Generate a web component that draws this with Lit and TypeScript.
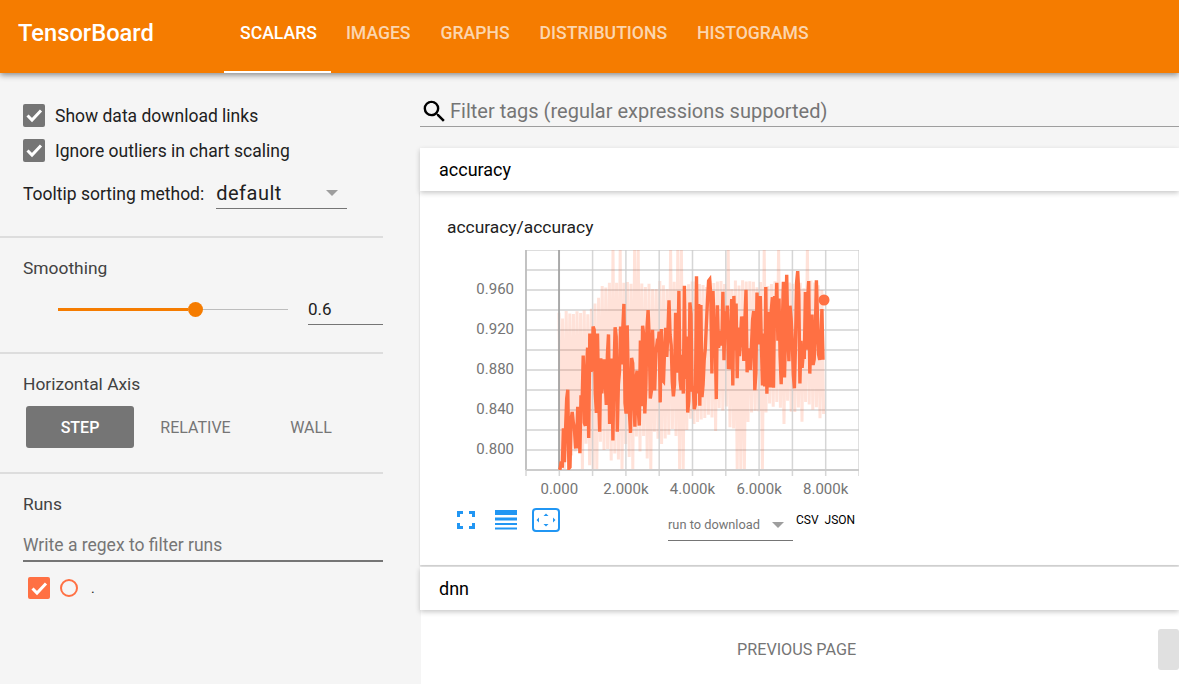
import { LitElement, css, html, svg } from 'lit';
import { customElement } from 'lit/decorators.js';

type Pt = [number, number];

// piecewise envelope of the curves, in chart pixels
const smoothTop: Pt[] = [[33, 220], [38, 170], [44, 113], [50, 116], [56, 100], [66, 60], [74, 80], [91, 49], [100, 55], [114, 50], [134, 60], [144, 35], [173, 21], [194, 35], [234, 40], [268, 18], [289, 28], [298, 40]];
const smoothLow: Pt[] = [[33, 220], [55, 220], [60, 190], [85, 190], [110, 203], [115, 170], [140, 165], [165, 163], [200, 145], [240, 145], [280, 140], [298, 110]];
const rawTop: Pt[] = [[33, 60], [60, 60], [75, 35], [90, 30], [298, 30]];
const rawLow: Pt[] = [[33, 220], [120, 210], [170, 185], [298, 170]];

const lerp = (pts: Pt[], x: number) => {
  for (let i = 1; i < pts.length; i++) {
    if (x <= pts[i][0]) {
      const [x0, y0] = pts[i - 1];
      const [x1, y1] = pts[i];
      return y0 + ((y1 - y0) * (x - x0)) / (x1 - x0);
    }
  }
  return pts[pts.length - 1][1];
};

const rng = (seed: number) => () => {
  seed = (seed * 1664525 + 1013904223) % 4294967296;
  return seed / 4294967296;
};

const smoothLine = () => {
  const r = rng(7);
  const out: string[] = [];
  for (let x = 33; x <= 298; x += 1.1) {
    const t = lerp(smoothTop, x);
    const b = lerp(smoothLow, x);
    out.push(`${x.toFixed(1)},${(t + (b - t) * r()).toFixed(1)}`);
  }
  return out.join(' ');
};

// raw values swing between the extremes, with the odd spike past them
const rawLine = () => {
  const r = rng(11);
  const out: string[] = [];
  let up = true;
  for (let x = 33; x <= 298; x += 1.8) {
    const spike = r() < 0.18;
    const y = up
      ? (spike && x > 65 ? 0 : lerp(rawTop, x) + r() * 10)
      : (spike ? 220 : lerp(rawLow, x) - r() * 25);
    out.push(`${x.toFixed(1)},${y.toFixed(1)}`);
    up = !up;
  }
  return out.join(' ');
};

const H_LINES = Array.from({ length: 12 }, (_, i) => i * 20);
const V_LINES = Array.from({ length: 11 }, (_, i) => i * 33.3);
const Y_LABELS = ['0.960', '0.920', '0.880', '0.840', '0.800'];
const X_LABELS = ['0.000', '2.000k', '4.000k', '6.000k', '8.000k'];

@customElement('scalar-chart')
export class ScalarChart extends LitElement {
  static styles = css`
    :host {
      display: block;
    }
    svg {
      display: block;
    }
    text {
      font-family: Roboto, sans-serif;
      font-size: 15px;
      fill: #757575;
    }
  `;

  render() {
    return html`
      <svg width="412" height="250" viewBox="-79 0 412 250">
        ${H_LINES.map((y) => svg`<line x1="0" x2="333" y1=${y} y2=${y} stroke="#ddd" stroke-width="1.8"></line>`)}
        <svg x="0" y="0" width="333" height="220" viewBox="0 0 333 220">
          <polyline points=${rawLine()} fill="none" stroke="#ff7043" stroke-opacity="0.2" stroke-width="3"></polyline>
        </svg>
        ${V_LINES.map((x) => svg`<line x1=${x} x2=${x} y1="0" y2="226" stroke="#ccc" stroke-opacity="0.8" stroke-width="1.5"></line>`)}
        <line x1="0" x2="0" y1="0" y2="220" stroke="#bbb" stroke-width="1.6"></line>
        <line x1="33" x2="33" y1="0" y2="220" stroke="#9e9e9e" stroke-width="1.6"></line>
        <line x1="0" x2="333" y1="220" y2="220" stroke="#ccc" stroke-width="1.8"></line>
        <svg x="0" y="0" width="333" height="220" viewBox="0 0 333 220">
          <polyline points=${smoothLine()} fill="none" stroke="#ff7043" stroke-width="3.4" stroke-linejoin="miter"></polyline>
        </svg>
        <circle cx="298" cy="50" r="5.5" fill="#ff7043"></circle>
        ${Y_LABELS.map((t, i) => svg`<text x="-12" y=${44 + i * 40} text-anchor="end">${t}</text>`)}
        ${X_LABELS.map((t, i) => svg`<text x=${33.3 + i * 66.6} y="244" text-anchor="middle">${t}</text>`)}
      </svg>
    `;
  }
}

const check = html`<svg viewBox="0 0 22 22" width="22" height="22"><path d="M4.500 11.500l4.500 4.500 9-9.500" fill="none" stroke="#fff" stroke-width="3"></path></svg>`;

@customElement('app-root')
export class AppRoot extends LitElement {
  static styles = css`
    :host {
      display: block;
      height: 684px;
      overflow: hidden;
      background: #f5f5f5;
      font-family: Roboto, sans-serif;
      color: #212121;
    }
    .toolbar {
      height: 73px;
      background: #f57c00;
      display: flex;
      box-shadow: 0 2px 6px rgba(0, 0, 0, 0.45);
      position: relative;
    }
    .title {
      margin-left: 18px;
      width: 206px;
      font-size: 23.7px;
      font-weight: 500;
      line-height: 67px;
      color: #fff;
    }
    .tab {
      padding: 0 15px;
      height: 71px;
      line-height: 67px;
      font-size: 17.6px;
      font-weight: 500;
      color: rgba(255, 255, 255, 0.7);
    }
    .tab.on {
      padding-left: 16px;
      padding-right: 14px;
      color: #fff;
      border-bottom: 2px solid #fff;
    }
    .page {
      display: grid;
      grid-template-columns: 420px 1fr;
      height: 611px;
    }
    .side {
      width: 383px;
    }
    .group {
      padding-left: 23px;
      border-bottom: 2px solid #ddd;
      box-sizing: border-box;
    }
    .g1 {
      height: 165px;
      padding-top: 31px;
    }
    .g2 {
      height: 116px;
      padding-top: 20px;
    }
    .g3 {
      height: 120px;
      padding-top: 20px;
    }
    .g4 {
      border: none;
      padding-top: 20px;
    }
    .check-row {
      display: flex;
      align-items: center;
      gap: 10px;
      height: 23px;
      margin-bottom: 12px;
      font-size: 17.5px;
    }
    .box {
      width: 22px;
      height: 22px;
      background: #757575;
      border-radius: 2px;
      flex: none;
    }
    .check-row .box {
      height: 23px;
    }
    .box svg {
      display: block;
    }
    .sort {
      display: flex;
      align-items: center;
      font-size: 17.5px;
    }
    .sort-label {
      padding-top: 5px;
    }
    .select {
      margin-left: 12px;
      width: 131px;
      height: 35px;
      border-bottom: 1px solid #757575;
      display: flex;
      justify-content: space-between;
      align-items: center;
      padding: 3px 9px 0 0;
      box-sizing: border-box;
      font-size: 20px;
      letter-spacing: 0.5px;
    }
    .arrow {
      width: 0;
      height: 0;
      border-style: solid;
      border-width: 6px 6px 0;
      border-color: #9e9e9e transparent transparent;
    }
    .label {
      font-size: 17.4px;
      line-height: 20px;
      color: #424242;
    }
    .slider-row {
      display: flex;
      align-items: center;
      margin-top: 16px;
      padding-left: 35px;
    }
    .slider {
      width: 230px;
      height: 16px;
      flex: none;
      display: flex;
      align-items: center;
      margin-right: 20px;
    }
    .fill {
      width: 130px;
      height: 3px;
      background: #f57c00;
    }
    .knob {
      width: 15px;
      height: 15px;
      border-radius: 50%;
      background: #f57c00;
      flex: none;
    }
    .rest {
      flex: 1;
      height: 1px;
      background: #bdbdbd;
    }
    .num {
      width: 75px;
      height: 31px;
      box-sizing: border-box;
      border-bottom: 1px solid #757575;
      font-size: 17px;
      line-height: 31px;
    }
    .axis {
      display: flex;
      margin: 12px 0 0 3px;
      font-size: 16px;
      color: #757575;
    }
    .axis div {
      width: 108px;
      height: 42px;
      margin-right: 7.500px;
      line-height: 43px;
      text-align: center;
      border-radius: 3px;
    }
    .axis .on {
      background: #757575;
      color: #fff;
      font-weight: 500;
    }
    .regex {
      margin-top: 14px;
      height: 34px;
      line-height: 34px;
      box-sizing: border-box;
      border-bottom: 2px solid #757575;
      font-size: 17.5px;
      color: #757575;
    }
    .run {
      display: flex;
      align-items: center;
      margin: 15px 0 0 5px;
    }
    .run .box {
      background: #ff7043;
    }
    .ring {
      width: 14px;
      height: 14px;
      margin-left: 10px;
      border: 2px solid #ff7043;
      border-radius: 50%;
    }
    .run span {
      margin-left: 13px;
      font-size: 14px;
    }
    .filter {
      display: flex;
      align-items: center;
      height: 54px;
      border-bottom: 1px solid #9e9e9e;
      box-sizing: border-box;
      color: #757575;
      font-size: 20px;
      gap: 1px;
      padding-top: 23px;
    }
    .pane-head {
      height: 43px;
      padding-left: 19px;
      background: #fff;
      line-height: 43px;
      font-size: 18px;
      color: #000;
      box-shadow: 0 2px 5px rgba(0, 0, 0, 0.22);
      position: relative;
    }
    .first {
      margin-top: 21px;
    }
    .pane-body {
      height: 374px;
      margin-bottom: 2px;
      background: #fff;
      box-shadow: 0 1px 2px rgba(0, 0, 0, 0.2);
      padding: 25px 0 0 27px;
      box-sizing: border-box;
    }
    .chart-title {
      font-size: 17.4px;
      line-height: 22px;
      margin-bottom: 12px;
    }
    .tools {
      display: flex;
      margin-top: 4px;
      padding-left: 10px;
    }
    .tools svg {
      display: block;
    }
    .icons {
      display: flex;
      align-items: center;
      gap: 20px;
      width: 211px;
      height: 32px;
    }
    .fit {
      margin-left: -5px;
    }
    .run-select {
      width: 125px;
      height: 32px;
      margin-top: 5px;
      border-bottom: 1px solid #757575;
      box-sizing: border-box;
      display: flex;
      align-items: center;
      justify-content: space-between;
      padding-right: 9px;
      font-size: 12.8px;
      color: #757575;
    }
    .links {
      margin: 9px 0 0 3px;
      font-size: 12px;
      line-height: 14px;
      color: #000;
      display: flex;
      gap: 6px;
    }
    .pager {
      margin-left: 1px;
      height: 74px;
      background: #fff;
      display: flex;
      padding-top: 19px;
      box-sizing: border-box;
    }
    .prev {
      margin-left: 316px;
      width: 421px;
      line-height: 41px;
      font-size: 16.2px;
      color: #757575;
    }
    .next {
      flex: 1;
      height: 41px;
      background: #e0e0e0;
      border-radius: 3px;
    }
  `;

  render() {
    return html`
      <div class="toolbar">
        <div class="title">TensorBoard</div>
        <div class="tab on">SCALARS</div>
        <div class="tab">IMAGES</div>
        <div class="tab">GRAPHS</div>
        <div class="tab">DISTRIBUTIONS</div>
        <div class="tab">HISTOGRAMS</div>
      </div>
      <div class="page">
        <div class="side">
          <div class="group g1">
            <div class="check-row"><div class="box">${check}</div>Show data download links</div>
            <div class="check-row"><div class="box">${check}</div>Ignore outliers in chart scaling</div>
            <div class="sort"><span class="sort-label">Tooltip sorting method:</span>
              <div class="select">default<div class="arrow"></div></div>
            </div>
          </div>
          <div class="group g2">
            <div class="label">Smoothing</div>
            <div class="slider-row">
              <div class="slider"><div class="fill"></div><div class="knob"></div><div class="rest"></div></div>
              <div class="num">0.6</div>
            </div>
          </div>
          <div class="group g3">
            <div class="label">Horizontal Axis</div>
            <div class="axis"><div class="on">STEP</div><div>RELATIVE</div><div>WALL</div></div>
          </div>
          <div class="group g4">
            <div class="label">Runs</div>
            <div class="regex">Write a regex to filter runs</div>
            <div class="run"><div class="box">${check}</div><div class="ring"></div><span>.</span></div>
          </div>
        </div>
        <div class="main">
          <div class="filter">
            <svg width="29" height="29" viewBox="0 0 24 24"><path d="M15.500 14h-.79l-.28-.27A6.470 6.470 0 0 0 16 9.500 6.500 6.500 0 1 0 9.500 16c1.610 0 3.090-.59 4.230-1.570l.27.28v.79l5 4.990L20.490 19l-4.990-5zm-6 0C7.010 14 5 11.990 5 9.500S7.010 5 9.500 5 14 7.010 14 9.500 11.990 14 9.500 14z" fill="#000"></path></svg>
            Filter tags (regular expressions supported)
          </div>
          <div class="pane-head first">accuracy</div>
          <div class="pane-body">
            <div class="chart-title">accuracy/accuracy</div>
            <scalar-chart></scalar-chart>
            <div class="tools">
              <div class="icons">
                <svg width="18" height="18" viewBox="0 0 18 18"><path d="M1.500 6V1.500H6M12 1.500h4.500V6M16.500 12v4.500H12M6 16.500H1.500V12" fill="none" stroke="#2196f3" stroke-width="3"></path></svg>
                <svg width="22" height="20" viewBox="0 0 22 20"><path d="M0 0h22v5H0zM0 7.500h22v3H0zM0 13h22v2H0zM0 17.500h22v2H0z" fill="#2196f3"></path></svg>
                <svg class="fit" width="28" height="24" viewBox="0 0 28 24"><rect x="1" y="1" width="26" height="22" rx="3" fill="none" stroke="#2196f3" stroke-width="2"></rect><path d="M14 5.500l-2.500 2.500h5zM14 18.500l-2.500-2.500h5zM4.500 12l2.500-2.500v5zM23.500 12l-2.500-2.500v5z" fill="#2196f3"></path></svg>
              </div>
              <div class="run-select">run to download<div class="arrow"></div></div>
              <div class="links"><span>CSV</span><span>JSON</span></div>
            </div>
          </div>
          <div class="pane-head">dnn</div>
          <div class="pager">
            <div class="prev">PREVIOUS PAGE</div>
            <div class="next"></div>
          </div>
        </div>
      </div>
    `;
  }
}
